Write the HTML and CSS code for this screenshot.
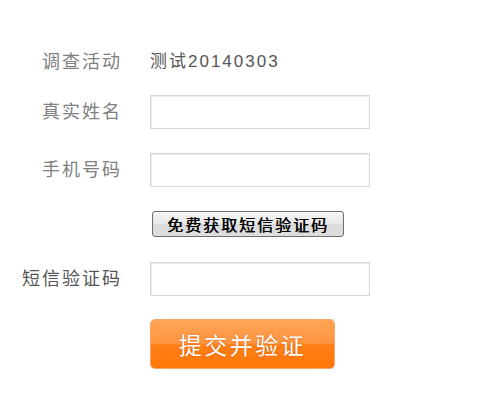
FILE: index.html
```html
<!DOCTYPE html>
<html lang="zh-CN">
<head>
  <meta charset="UTF-8">
  <meta name="viewport" content="width=device-width, initial-scale=1.0">
  <title>调查活动</title>
  <link rel="stylesheet" href="styles.css">
</head>
<body>

  <form class="formulario">
    <div class="fila fila-info">
      <span class="etiqueta">调查活动</span>
      <span class="valor">测试20140303</span>
    </div>

    <div class="fila">
      <label class="etiqueta">真实姓名</label>
      <input type="text" class="campo">
    </div>

    <div class="fila">
      <label class="etiqueta">手机号码</label>
      <input type="text" class="campo">
    </div>

    <div class="fila fila-boton">
      <span class="etiqueta"></span>
      <button type="button" class="btn-codigo">免费获取短信验证码</button>
    </div>

    <div class="fila fila-sms">
      <label class="etiqueta etiqueta-oscura">短信验证码</label>
      <input type="text" class="campo">
    </div>

    <div class="fila">
      <span class="etiqueta"></span>
      <button type="button" class="btn-enviar">提交并验证</button>
    </div>
  </form>

</body>
</html>
```

FILE: styles.css
```css
* {
  margin: 0;
  padding: 0;
  box-sizing: border-box;
}

body {
  background: #fff;
  font-family: "Liberation Sans", "Noto Sans CJK SC", sans-serif;
  font-size: 17px;
  color: #666;
}

.formulario {
  display: flex;
  flex-direction: column;
  padding-top: 52px;
}

.fila {
  display: flex;
  align-items: center;
  gap: 28px;
  margin-bottom: 24px;
}

.etiqueta {
  width: 122px;
  flex-shrink: 0;
  text-align: right;
  color: #808080;
  font-size: 18px;
  letter-spacing: 2px;
  line-height: 20px;
}

.etiqueta-oscura {
  color: #555;
}

.fila-info {
  margin-bottom: 23px;
}

.valor {
  color: #555;
  letter-spacing: 2px;
  line-height: 20px;
}

.campo {
  width: 220px;
  height: 34px;
  border: 1px solid #d6d6d6;
  box-shadow: inset 1px 1px 0 #ececec;
  background: #fff;
  outline: none;
}

.fila-boton {
  margin-bottom: 25px;
}

.fila-sms {
  margin-bottom: 23px;
}

.btn-codigo {
  width: 192px;
  height: 26px;
  margin-left: 2px;
  border: 1px solid #6f6f6f;
  border-radius: 3px;
  background: linear-gradient(to bottom, #f6f6f6, #e8e8e8 50%, #dadada 51%, #dedede);
  font-family: "Noto Sans CJK SC", sans-serif;
  font-size: 16px;
  letter-spacing: 2px;
  color: #000;
  text-shadow: 0.5px 0 0 #000;
  cursor: pointer;
}

.btn-enviar {
  width: 185px;
  height: 50px;
  border: 1px solid #f7a468;
  border-radius: 5px;
  background: linear-gradient(to bottom, #ffa456, #ff9540 48%, #ff7f17 52%, #ff7708);
  color: #fff;
  font-family: "Noto Sans CJK SC", sans-serif;
  font-size: 23px;
  letter-spacing: 2.5px;
  text-shadow: 0 0 2px rgba(180, 60, 0, 0.5);
  cursor: pointer;
}
```
